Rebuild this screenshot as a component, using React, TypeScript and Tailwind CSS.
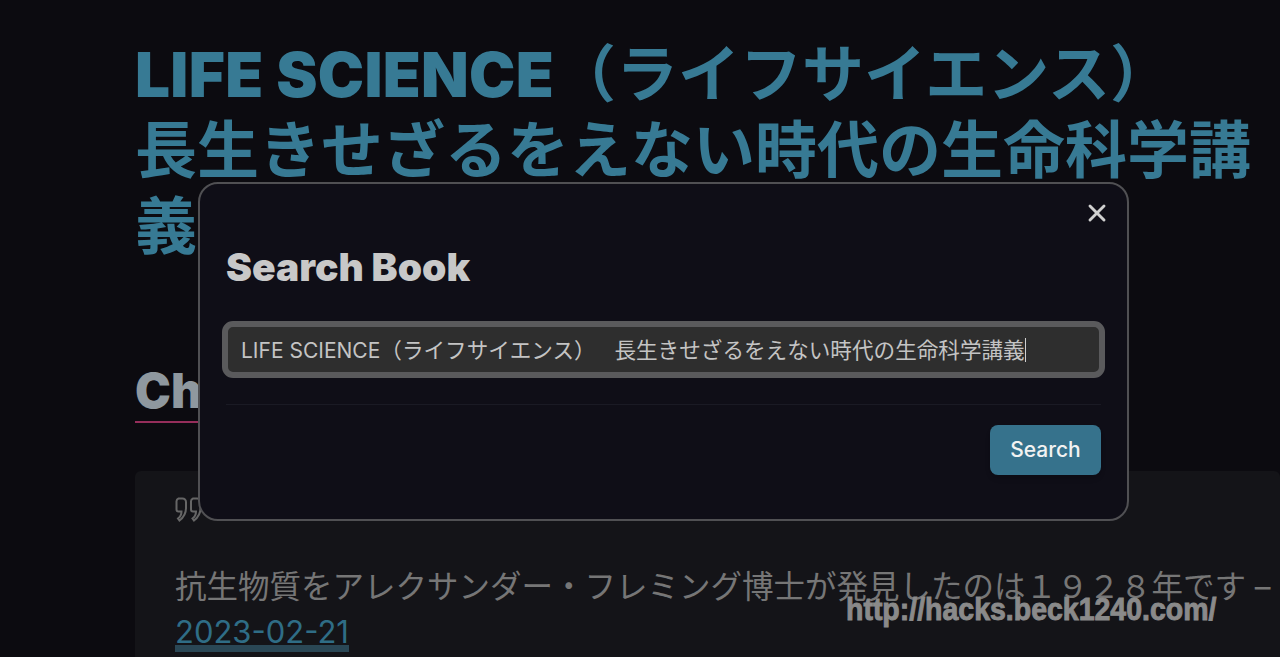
import { X } from "lucide-react";

const sans = { fontFamily: 'Inter, "Noto Sans CJK JP", sans-serif' };

function QuoteMark() {
  const d = "M3.500 1.500h4a3.500 3.500 0 0 1 3.500 3.500v6c0 5.500-2.500 9.500-6.500 12.500l-1.500-2c2-1.500 3.500-4 3.500-7h-3a2 2 0 0 1-2-2v-8a3 3 0 0 1 2-3z";
  return (
    <svg width="30" height="26" viewBox="0 0 30 26" fill="none" stroke="#666666" strokeWidth="2">
      <path d={d} />
      <path d={d} transform="translate(14.500 0)" />
    </svg>
  );
}

function SearchModal() {
  return (
    <div className="absolute left-[198px] top-[182px] w-[931px] h-[339px] rounded-[20px] border-2 border-[#505053] bg-[#0f0e17] px-[26px]">
      <button className="absolute right-[16px] top-[15px] text-[#d0d0d0]">
        <X size={28} strokeWidth={2.5} />
      </button>
      <h2 className="mt-[58px] text-[39px] leading-[50px] font-black text-[#c8c8c8]">Search Book</h2>
      <div className="mt-[29px] -mx-[4px] h-[57px] rounded-[11px] border-[6px] border-[#5a5a5c] bg-[#2e2e2e] flex items-center pl-[13px] pt-[1px] text-[21.600px] text-[#c4c4c4]">
        <span className="whitespace-nowrap">
          <span className="text-[21px]">LIFE SCIENCE</span>（ライフサイエンス）　<span className="ml-[8px]">長生きせざるをえない時代の生命科学講義</span>
        </span>
        <span className="w-px h-[24px] bg-[#d0d0d0]"></span>
      </div>
      <div className="mt-[26px] border-t border-[#1a1a24]"></div>
      <div className="mt-[20px] flex justify-end">
        <button className="h-[50px] w-[111px] rounded-[8px] bg-[#36728c] text-[21px] font-medium text-[#f2f2f2] shadow-md">Search</button>
      </div>
    </div>
  );
}

export default function App() {
  return (
    <div className="relative h-[657px] w-[1280px] overflow-hidden bg-[#0c0b10]" style={sans}>
      <div className="pl-[135px] pt-[37px]">
        <h1 className="text-[#377a94] text-[62px] leading-[76px] font-bold whitespace-pre-line">
          <span className="font-black tracking-[0.3px]">LIFE SCIENCE</span>
          {"（ライフサイエンス）\n長生きせざるをえない時代の生命科学講\n義"}
        </h1>
        <h2 className="mt-[96px] w-[500px] border-b-2 border-[#962e5b] text-[48px] leading-[60px] font-black text-[#8f989f]">Ch</h2>
        <div className="mt-[48px] w-[1145px] h-[200px] rounded-[6px] bg-[#141418] px-[40px] pt-[26px]">
          <QuoteMark />
          <p className="mt-[42px] whitespace-nowrap text-[31.500px] leading-[44px] text-[#767676]">
            抗生物質をアレクサンダー・フレミング博士が発見したのは１９２８年です –
          </p>
          <a className="inline-block text-[31px] leading-[26px] mt-[10px] text-[#2f6d86] border-b-[7px] border-[#2a4755]">2023-02-21</a>
        </div>
      </div>
      <SearchModal />
      <div className="absolute left-[846px] top-[590px] text-[32px] leading-[38px] font-bold text-[#8a8a8a] [-webkit-text-stroke:1px_#8a8a8a] origin-left scale-x-[0.89]" style={{ fontFamily: '"Liberation Sans", sans-serif' }}>
        http://hacks.beck1240.com/
      </div>
    </div>
  );
}
